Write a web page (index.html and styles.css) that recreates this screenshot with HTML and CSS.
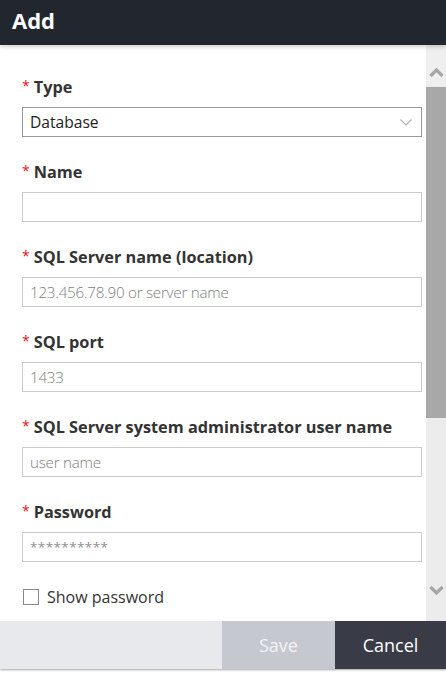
FILE: index.html
```html
<!DOCTYPE html>
<html>
<head>
<meta charset="utf-8">
<link rel="stylesheet" href="styles.css">
</head>
<body>
<div class="dialog">
  <div class="header">Add</div>
  <div class="main">
    <div class="form">
      <div class="field">
        <div class="label"><span class="req">*</span>Type</div>
        <div class="select">
          <span>Database</span>
          <svg class="caret" width="12" height="7" viewBox="0 0 12 7"><path d="M0.5 0.5 L6 6 L11.5 0.5" fill="none" stroke="#b0b0b0" stroke-width="1.2"/></svg>
        </div>
      </div>
      <div class="field">
        <div class="label"><span class="req">*</span>Name</div>
        <div class="input"></div>
      </div>
      <div class="field">
        <div class="label"><span class="req">*</span>SQL Server name (location)</div>
        <div class="input ph">123.456.78.90 or server name</div>
      </div>
      <div class="field">
        <div class="label"><span class="req">*</span>SQL port</div>
        <div class="input ph">1433</div>
      </div>
      <div class="field">
        <div class="label"><span class="req">*</span>SQL Server system administrator user name</div>
        <div class="input ph">user name</div>
      </div>
      <div class="field last">
        <div class="label"><span class="req">*</span>Password</div>
        <div class="input ph stars">**********</div>
      </div>
      <div class="check">
        <span class="box"></span>
        <span>Show password</span>
      </div>
    </div>
    <div class="scrollbar">
      <div class="sb-up">
        <svg width="15" height="11" viewBox="0 0 15 11"><path d="M1.5 9 L7.5 3 L13.5 9" fill="none" stroke="#a6a6a6" stroke-width="3.2"/></svg>
      </div>
      <div class="sb-thumb"></div>
      <div class="sb-track"></div>
      <div class="sb-down">
        <svg width="15" height="11" viewBox="0 0 15 11"><path d="M1.5 2 L7.5 8 L13.5 2" fill="none" stroke="#a6a6a6" stroke-width="3.2"/></svg>
      </div>
    </div>
  </div>
  <div class="footer">
    <div class="btn save">Save</div>
    <div class="btn cancel">Cancel</div>
  </div>
</div>
</body>
</html>
```

FILE: styles.css
```css
html, body {
  margin: 0;
  padding: 0;
  background: #ffffff;
}
body {
  width: 446px;
  height: 674px;
  overflow: hidden;
  font-family: "Open Sans", "Noto Sans", sans-serif;
  color: #333333;
}
.dialog {
  width: 446px;
  height: 669px;
  display: flex;
  flex-direction: column;
  box-shadow: 0 1px 2px rgba(0, 0, 0, 0.35);
}
.header {
  height: 45px;
  flex: none;
  background: #22272f;
  color: #ffffff;
  font-weight: 700;
  font-size: 22px;
  line-height: 40px;
  padding-left: 12px;
  position: relative;
  z-index: 2;
  box-shadow: 0 2px 4px rgba(0, 0, 0, 0.18);
}
.main {
  height: 576px;
  flex: none;
  display: flex;
  overflow: hidden;
}
.form {
  flex: 1;
  padding: 32px 4px 0 22px;
}
.field {
  margin-bottom: 25px;
}
.field.last {
  margin-bottom: 26px;
}
.label {
  font-size: 16.3px;
  font-weight: 700;
  line-height: 20px;
  height: 20px;
  margin-bottom: 10px;
  white-space: nowrap;
  color: #333333;
}
.req {
  color: #e8101a;
  font-size: 14px;
  font-weight: 400;
  margin-right: 4px;
  position: relative;
  top: -2px;
}
.select, .input {
  box-sizing: border-box;
  height: 30px;
  width: 400px;
  border: 1px solid #cccccc;
  padding: 0 7px;
  font-size: 15.6px;
  line-height: 28px;
  white-space: nowrap;
}
.select {
  border-color: #999999;
  display: flex;
  justify-content: space-between;
  align-items: center;
  color: #222222;
}
.caret {
  margin-right: 2px;
}
.ph {
  color: #7e7e7e;
  font-weight: 300;
  font-size: 15.2px;
  letter-spacing: -0.25px;
}
.stars {
  font-size: 13.5px;
  font-weight: 400;
  letter-spacing: 0.4px;
  color: #909090;
}
.check {
  display: flex;
  align-items: center;
  gap: 8px;
  font-size: 16px;
  color: #333333;
  height: 17px;
  margin-left: 1px;
}
.box {
  width: 14px;
  height: 14px;
  border: 1px solid #888888;
  background: #ffffff;
}
.scrollbar {
  width: 20px;
  flex: none;
  display: flex;
  flex-direction: column;
  background: #ececec;
}
.sb-up {
  height: 41px;
  background: #efefef;
  display: flex;
  align-items: flex-end;
  justify-content: center;
  box-sizing: border-box;
}
.sb-up svg {
  margin-bottom: 8px;
}
.sb-thumb {
  height: 331px;
  background: #a8a8a8;
  margin-top: 1px;
}
.sb-track {
  flex: 1;
}
.sb-down {
  height: 36px;
  display: flex;
  justify-content: center;
  align-items: flex-start;
}
.footer {
  height: 48px;
  flex: none;
  background: #e8e9ec;
  display: flex;
  justify-content: flex-end;
}
.btn {
  font-size: 18px;
  line-height: 48px;
  text-align: center;
}
.save {
  width: 113px;
  background: #c5c8ce;
  color: #f3f3f5;
}
.cancel {
  width: 111px;
  background: #393c46;
  color: #ffffff;
}
```
